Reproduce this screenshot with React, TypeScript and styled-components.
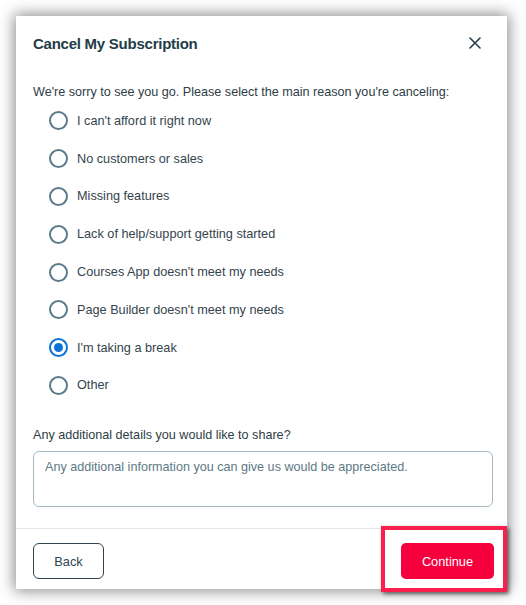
import styled, { createGlobalStyle } from "styled-components";

const GlobalStyle = createGlobalStyle`
    html, body {
        margin: 0;
        padding: 0;
        background: #ffffff;
    }
    body {
        font-family: "Liberation Sans", Arial, sans-serif;
    }
`;

const Page = styled.div`
    width: 526px;
    height: 605px;
    padding: 16px 19px 16px 16px;
    box-sizing: border-box;
    background: #ffffff;
`;

const Modal = styled.div`
    position: relative;
    width: 491px;
    height: 573px;
    background: #ffffff;
    box-shadow: 0 0 14px 2px rgba(0, 0, 0, 0.45);
    display: flex;
    flex-direction: column;
`;

const Header = styled.div`
    display: flex;
    align-items: center;
    justify-content: space-between;
    padding: 17px 25px 0 17px;
    height: 20px;
`;

const Title = styled.h2`
    margin: 0;
    font-size: 15px;
    font-weight: bold;
    letter-spacing: -0.25px;
    color: #233c48;
`;

const CloseButton = styled.button`
    border: none;
    background: none;
    padding: 0;
    width: 14px;
    height: 14px;
    display: flex;
    align-items: center;
    justify-content: center;
    cursor: pointer;
`;

const Body = styled.div`
    flex: 1;
    padding: 31px 13px 0 17px;
`;

const Intro = styled.p`
    margin: 0 0 2px;
    font-size: 12.6px;
    line-height: 16px;
    color: #2e3d45;
`;

const RadioList = styled.div`
    display: flex;
    flex-direction: column;
    padding-left: 16px;
`;

const RadioRow = styled.label`
    display: flex;
    align-items: center;
    gap: 9px;
    height: 37.8px;
    font-size: 12.7px;
    color: #34444d;
    cursor: pointer;
`;

const RadioCircle = styled.span<{ $checked?: boolean }>`
    width: 19px;
    height: 19px;
    box-sizing: border-box;
    border-radius: 50%;
    border: 2px solid ${p => (p.$checked ? "#0b72d9" : "#5b7b8a")};
    display: flex;
    align-items: center;
    justify-content: center;
    &::after {
        content: "";
        display: ${p => (p.$checked ? "block" : "none")};
        width: 9px;
        height: 9px;
        border-radius: 50%;
        background: #0b72d9;
    }
`;

const DetailsLabel = styled.div`
    margin-top: 24px;
    font-size: 12.6px;
    color: #2e3d45;
`;

const TextArea = styled.textarea`
    display: block;
    margin-top: 9px;
    width: 460px;
    height: 56px;
    box-sizing: border-box;
    border: 1px solid #a7bac4;
    border-radius: 6px;
    padding: 8px 11px;
    resize: none;
    font-family: "Liberation Sans", Arial, sans-serif;
    font-size: 12.6px;
    color: #2e3d45;
    &::placeholder {
        color: #5d7885;
    }
`;

const Footer = styled.div`
    display: flex;
    align-items: center;
    justify-content: space-between;
    border-top: 1px solid #e1e7ea;
    padding: 14px 13px 10px 17px;
`;

const BackButton = styled.button`
    width: 71px;
    height: 36px;
    border: 1px solid #2f4651;
    border-radius: 6px;
    background: #ffffff;
    font-family: "Liberation Sans", Arial, sans-serif;
    font-size: 12.8px;
    color: #2f4651;
    cursor: pointer;
`;

const ContinueButton = styled.button`
    width: 93px;
    height: 36px;
    border: none;
    border-radius: 5px;
    background: #f5003d;
    font-family: "Liberation Sans", Arial, sans-serif;
    font-size: 12.8px;
    color: #ffffff;
    cursor: pointer;
`;

const Highlight = styled.div`
    position: absolute;
    left: 365px;
    top: 510px;
    width: 126px;
    height: 66px;
    box-sizing: border-box;
    border: 4px solid #fb1f4e;
    box-shadow: 2px 2px 4px rgba(0, 0, 0, 0.55);
    pointer-events: none;
`;

const reasons = [
    "I can't afford it right now",
    "No customers or sales",
    "Missing features",
    "Lack of help/support getting started",
    "Courses App doesn't meet my needs",
    "Page Builder doesn't meet my needs",
    "I'm taking a break",
    "Other",
];

export default function App() {
    const selected = "I'm taking a break";

    return (
        <>
            <GlobalStyle />
            <Page>
                <Modal>
                    <Header>
                        <Title>Cancel My Subscription</Title>
                        <CloseButton aria-label="Close">
                            <svg width="12" height="12" viewBox="0 0 12 12">
                                <path
                                    d="M1 1L11 11M11 1L1 11"
                                    stroke="#233c48"
                                    strokeWidth="1.6"
                                    strokeLinecap="round"
                                />
                            </svg>
                        </CloseButton>
                    </Header>
                    <Body>
                        <Intro>
                            We're sorry to see you go. Please select the main reason you're canceling:
                        </Intro>
                        <RadioList>
                            {reasons.map(r => (
                                <RadioRow key={r}>
                                    <RadioCircle $checked={r === selected} />
                                    {r}
                                </RadioRow>
                            ))}
                        </RadioList>
                        <DetailsLabel>Any additional details you would like to share?</DetailsLabel>
                        <TextArea placeholder="Any additional information you can give us would be appreciated." />
                    </Body>
                    <Footer>
                        <BackButton>Back</BackButton>
                        <ContinueButton>Continue</ContinueButton>
                    </Footer>
                    <Highlight />
                </Modal>
            </Page>
        </>
    );
}
